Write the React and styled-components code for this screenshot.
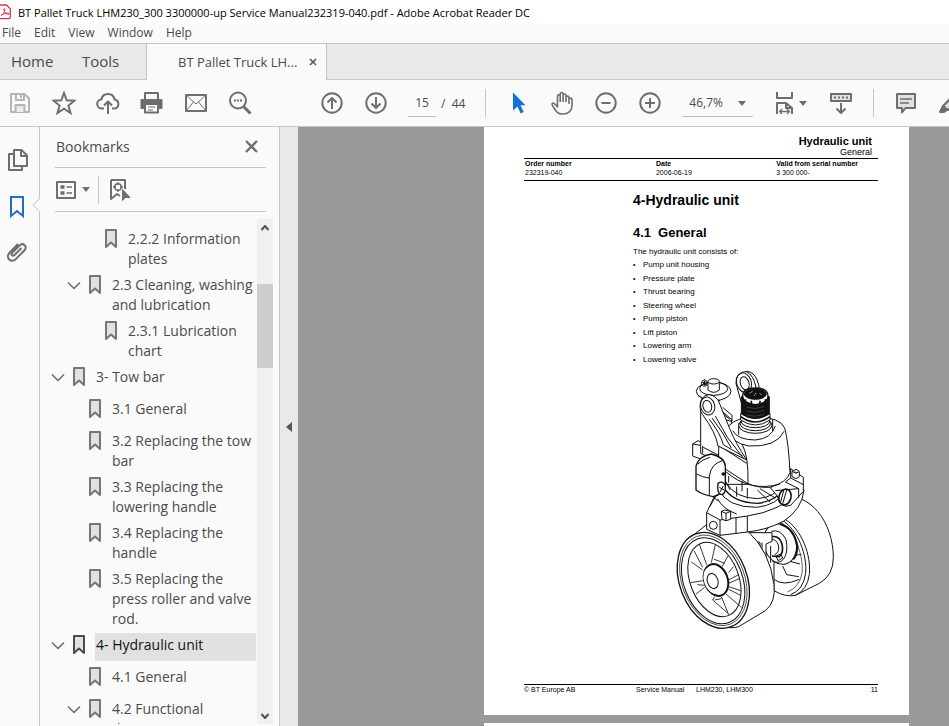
import { useState } from "react";
import styled, { createGlobalStyle } from "styled-components";

const GREY = "#6e6e6e";

const BOOKMARKS = [
  { text: "2.2.2 Information plates", level: 2 },
  { text: "2.3 Cleaning, washing and lubrication", level: 1, open: true },
  { text: "2.3.1 Lubrication chart", level: 2 },
  { text: "3- Tow bar", level: 0, open: true },
  { text: "3.1 General", level: 1 },
  { text: "3.2 Replacing the tow bar", level: 1 },
  { text: "3.3 Replacing the lowering handle", level: 1 },
  { text: "3.4 Replacing the handle", level: 1 },
  { text: "3.5 Replacing the press roller and valve rod.", level: 1 },
  { text: "4- Hydraulic unit", level: 0, open: true },
  { text: "4.1 General", level: 1 },
  { text: "4.2 Functional description", level: 1, open: true },
];

const PARTS = [
  "Pump unit housing",
  "Pressure plate",
  "Thrust bearing",
  "Steering wheel",
  "Pump piston",
  "Lift piston",
  "Lowering arm",
  "Lowering valve",
];

const GlobalStyle = createGlobalStyle`
  * {
    box-sizing: border-box;
  }

  body {
    margin: 0;
    overflow: hidden;
    font-family: "Open Sans", "Noto Sans", sans-serif;
    color: #4b4b4b;
  }

  button, input, select {
    font: inherit;
    color: inherit;
    background: none;
    border: 0;
    padding: 0;
    margin: 0;
  }

  svg {
    display: block;
    flex: none;
  }
`;

const Window = styled.div`
  display: flex;
  flex-direction: column;
  height: 100vh;
  background: #fafafa;
`;

const TitleBar = styled.header`
  display: flex;
  align-items: center;
  gap: 7px;
  height: 24px;
  flex: none;
  background: #fff;
  color: #000;
  font-size: 11px;
  white-space: nowrap;
`;

const MenuBar = styled.nav`
  display: flex;
  align-items: center;
  gap: 13px;
  height: 20px;
  flex: none;
  padding: 0 2px 2px;
  border-bottom: 1px solid #c6c6c6;
  font-size: 12px;
`;

const TabRow = styled.div`
  display: flex;
  height: 36px;
  flex: none;
  background: #e9e9e9;
`;

const Tab = styled.button`
  width: ${(p) => p.$width}px;
  padding: 0 0 2px ${(p) => p.$pad}px;
  border-bottom: 1px solid #c6c6c6;
  font-size: 15px;
  text-align: left;
`;

const FileTab = styled.div`
  display: flex;
  align-items: center;
  justify-content: space-between;
  width: 181px;
  padding: 0 9px 0 31px;
  border: 1px solid #c6c6c6;
  border-width: 0 1px;
  background: #fafafa;
  font-size: 13px;
  white-space: nowrap;
`;

const TabFill = styled.div`
  flex: 1;
  border-bottom: 1px solid #c6c6c6;
`;

const Toolbar = styled.div`
  display: flex;
  align-items: center;
  gap: 20px;
  height: 47px;
  flex: none;
  padding-left: 8px;
  border-bottom: 1px solid #c6c6c6;
  overflow: hidden;
  font-size: 12px;
`;

const Group = styled.div`
  display: flex;
  align-items: center;
  gap: ${(p) => p.$gap ?? 20}px;
  margin-right: ${(p) => p.$after ?? 0}px;
  white-space: nowrap;
`;

const IconButton = styled.button`
  display: flex;
  align-items: center;
  justify-content: center;
  flex: none;
  min-width: ${(p) => p.$size ?? 24}px;
  height: 24px;
`;

const PageInput = styled.input`
  width: 28px;
  height: 27px;
  border-bottom: 1px solid #c0c0c0;
  text-align: center;
`;

const ZoomBox = styled.div`
  position: relative;
  width: 71px;
  flex: none;

  select {
    appearance: none;
    width: 100%;
    height: 27px;
    padding-left: 7px;
    border-bottom: 1px solid #c0c0c0;
  }

  svg {
    position: absolute;
    right: 7px;
    top: 11px;
    pointer-events: none;
  }
`;

const Divider = styled.span`
  width: 1px;
  height: 28px;
  flex: none;
  background: #c6c6c6;
`;

const Main = styled.main`
  display: flex;
  flex: 1;
  min-height: 0;
`;

const Rail = styled.aside`
  position: relative;
  display: flex;
  flex-direction: column;
  align-items: center;
  gap: 22px;
  width: 40px;
  flex: none;
  padding: 21px 3px 0 0;
  border-right: 1px solid #c6c6c6;
`;

const Notch = styled.svg`
  position: absolute;
  right: -1px;
  top: 71px;
`;

const Panel = styled.section`
  display: flex;
  flex-direction: column;
  width: 240px;
  flex: none;
  border-right: 1px solid #c6c6c6;
`;

const PanelHead = styled.div`
  display: flex;
  align-items: center;
  justify-content: space-between;
  height: 41px;
  flex: none;
  margin: 0 13px 0 15px;
  padding: 0 6px 2px 1px;
  border-bottom: 1px solid #c6c6c6;

  h2 {
    margin: 0;
    font-size: 14px;
    font-weight: 400;
  }
`;

const PanelTools = styled.div`
  display: flex;
  align-items: center;
  gap: 8px;
  height: 44px;
  flex: none;
  margin: 0 13px 0 15px;
  border-bottom: 1px solid #c6c6c6;
`;

const PanelBody = styled.div`
  display: flex;
  flex: 1;
  min-height: 0;
  padding: 7px 6px 2px 0;
`;

const Tree = styled.ul`
  flex: 1;
  min-width: 0;
  margin: 0;
  padding: 8px 1px 0 11px;
  overflow: hidden;
  list-style: none;
`;

const TreeItem = styled.li`
  display: flex;
  align-items: flex-start;
  gap: 8px;
  margin-bottom: 4px;
  padding-left: ${(p) => p.$level * 16}px;
`;

const Toggle = styled.button`
  width: 14px;
  height: 24px;
  flex: none;
`;

const Label = styled.button`
  flex: 1;
  min-height: 28px;
  margin-left: 2px;
  padding: 2px 0 0 1px;
  display: flex;
  background: ${(p) => (p.$active ? "#e1e1e1" : "none")};
  color: ${(p) => (p.$active ? "#111" : "inherit")};
  font-size: 14px;
  line-height: 20px;
  text-align: left;
`;

const ScrollTrack = styled.div`
  display: flex;
  flex-direction: column;
  align-items: center;
  justify-content: space-between;
  width: 16px;
  flex: none;
  background: #f0f0f0;
`;

const ScrollThumb = styled.div`
  width: 16px;
  height: 84px;
  margin: 48px 0 auto;
  background: #cdcdcd;
`;

const Collapse = styled.button`
  display: flex;
  align-items: center;
  justify-content: center;
  width: 18px;
  flex: none;
  background: #e9e9e9;
`;

const Canvas = styled.div`
  flex: 1;
  min-width: 0;
  padding: 0 40px 0 186px;
  background: #999;
  overflow: hidden;
`;

const Sheet = styled.article`
  height: 588px;
  display: flex;
  flex-direction: column;
  margin-bottom: 8px;
  padding: 8px 31px 20px 40px;
  background: #fff;
  color: #000;
  font-family: "Liberation Sans", Arial, sans-serif;
  font-size: 7px;
`;

const RunningHead = styled.div`
  padding: 0 6px 1px 0;
  border-bottom: 1px solid #000;
  text-align: right;
  font-size: 9px;
  line-height: 10px;

  strong {
    display: block;
    font-size: 11px;
    line-height: 12px;
  }
`;

const OrderTable = styled.table`
  width: 100%;
  table-layout: fixed;
  border-collapse: collapse;
  border-bottom: 1px solid #000;
  text-align: left;
  line-height: 9px;
  white-space: nowrap;

  th, td {
    padding: 0 0 0 1px;
  }

  td {
    padding-bottom: 3px;
  }

  th:nth-child(1) {
    width: 37%;
  }

  th:nth-child(2) {
    width: 34%;
  }
`;

const Chapter = styled.div`
  padding: 10px 0 0 109px;
  font-size: 8px;
  line-height: 12px;

  h1, h2 {
    margin: 0;
    font-size: 14px;
    line-height: 18px;
  }

  h2 {
    margin: 15px 0 4px;
    font-size: 13px;
  }

  h2 span {
    margin-right: 7px;
  }

  p {
    margin: 0;
  }

  ul {
    display: flex;
    flex-direction: column;
    justify-content: space-between;
    height: 107px;
    margin: 1px 0 0;
    padding: 0;
    list-style: none;
  }

  li::before {
    content: "•";
    display: inline-block;
    width: 10px;
    font-size: 7px;
  }
`;

const Figure = styled.svg`
  width: 170px;
  height: 270px;
  margin-left: 146px;
`;

const SheetFoot = styled.footer`
  display: flex;
  margin-top: auto;
  border-top: 1px solid #000;
  padding-bottom: 1px;
  line-height: 9px;

  span:nth-child(1) {
    width: 112px;
  }

  span:nth-child(2) {
    width: 60px;
  }

  span:nth-child(3) {
    flex: 1;
  }
`;

const Icon = ({ w = 24, h = 24, sw = 2, color = GREY, children }) => (
  <svg
    width={w}
    height={h}
    viewBox={`0 0 ${w} ${h}`}
    fill="none"
    stroke={color}
    strokeWidth={sw}
    strokeLinejoin="round"
  >
    {children}
  </svg>
);

const Caret = () => (
  <svg width="8" height="5" viewBox="0 0 8 5" fill={GREY}>
    <path d="M0 0h8L4 5z" />
  </svg>
);

const BookmarkIcon = ({ active }) => (
  <Icon w={12} h={24} color={active ? "#4b4b4b" : "#767676"}>
    <path d="M1 3h10v17l-5-4.500-5 4.500z" fill="#e1e1e1" />
  </Icon>
);

const FileIcon = () => (
  <svg width="11" height="16" viewBox="0 0 11 16" fill="none" stroke="#d6364f">
    <path d="M-3 1h9.500l3.800 3.800V13q0 1.600-1.600 1.600H-3" strokeWidth="1.300" />
    <path d="M1 11.500C3 10.500 5 8 4.800 5.300c-.1-1.100-1.200-.9-1 .3C4.200 8 6 10 8.500 10.300c1 0 .8-1.200-.4-1.200-2.400 0-5 .8-7.100 2.400z" />
  </svg>
);

const DiscIcon = ({ children }) => (
  <Icon>
    <circle cx="12" cy="12" r="9.700" />
    {children}
  </Icon>
);

const PumpDrawing = () => (
  <Figure
    viewBox="0 0 510 810"
    fill="none"
    stroke="#111"
    strokeWidth="3"
    strokeLinejoin="round"
    role="img"
    aria-label="Hydraulic unit"
  >
    {/* rear wheel */}
    <path
      d="M330 396C420 372 490 470 490 575Q490 628 448 652L376 688Q345 694 312 674V480z"
      fill="#fff"
    />
    <path d="M342 458C396 488 424 570 418 625Q412 672 376 688" />
    <path d="M332 460C386 490 412 570 407 622Q400 672 362 686" />
    <path d="M324 462C376 494 402 572 396 622Q388 664 352 678" strokeWidth="2" />
    <path d="M312 640Q340 662 388 640M338 594L360 580Q376 564 394 566M352 584L390 594M338 600L350 626 386 632" />
    <ellipse cx="330" cy="534" rx="48" ry="62" transform="rotate(-18 330 534)" fill="#fff" />
    <path d="M330 474Q372 486 382 540Q382 566 370 580" strokeWidth="6" />
    <path d="M304 496Q330 488 348 520Q356 560 340 580Q326 596 306 584" />
    <path d="M306 512Q328 508 336 534Q342 560 328 572L306 570" strokeWidth="5" />
    <path d="M302 520Q320 518 326 540Q328 560 314 566M318 570l14-6 6 12-14 8z" />
    <path d="M236 500H306V526L288 534V584L270 560V530L246 520z" fill="#fff" />
    <path d="M276 530V570M302 540V590" />

    {/* front wheel */}
    <path
      d="M62 514L112 474 232 494Q300 556 312 656Q318 708 286 734L206 782Q180 790 150 778z"
      fill="#fff"
    />
    <g transform="rotate(-21 130 643)">
      <ellipse cx="130" cy="643" rx="101" ry="149" fill="#fff" strokeWidth="4" />
      <ellipse cx="130" cy="643" rx="94" ry="141" strokeWidth="2" />
      <ellipse cx="129" cy="644" rx="88" ry="134" />
      <ellipse cx="134" cy="642" rx="73" ry="116" />
    </g>
    {/* spokes */}
    <g strokeWidth="2.500">
      <path d="M88 534L110 596M72 554L98 604M64 588L98 612" />
      <path d="M136 536L124 590M132 580L144 584 164 592M174 570L156 602" />
      <path d="M206 626L172 644M208 638L176 652M176 620L190 602" />
      <path d="M212 674L176 662M214 724L168 684M176 670L212 688" />
      <path d="M176 746L154 692M134 692L128 702 174 742M134 702L154 698" />
      <path d="M62 650L98 644M78 684L104 664M82 656L104 658" />
    </g>
    <ellipse cx="138" cy="642" rx="35" ry="49" transform="rotate(-20 138 642)" fill="#fff" strokeWidth="6" />
    <ellipse cx="130" cy="643" rx="28" ry="42" transform="rotate(-20 130 643)" fill="#fff" stroke="none" />
    <ellipse cx="128" cy="645" rx="16" ry="23" transform="rotate(-18 128 645)" />

    {/* steering plate and fork */}
    <path
      d="M110 440L150 355H390L402 372Q396 430 340 466Q290 492 232 498L150 508 110 490z"
      fill="#fff"
    />
    <path d="M110 440L150 462V508M150 462L232 450Q330 436 392 374M198 456V502M232 450V498M118 424L146 376M142 398Q160 430 200 444" />
    <circle cx="130" cy="478" r="12" />
    <path d="M154 436l10-4 18 4v24l-14 4-12-4zM154 436l14 6 14-6M168 442v22" fill="#fff" />
    <path d="M146 370Q170 424 260 424Q322 418 350 370" fill="#fff" />
    <path d="M160 362Q186 410 262 412Q320 406 340 366" strokeWidth="4" />
    <path d="M170 352Q196 396 262 398Q316 394 336 356M200 362V392M232 366V398M262 372L300 408M270 368L316 396" />

    {/* right bracket */}
    <path d="M302 366L362 308 400 334V376L362 418Q330 430 322 390z" fill="#fff" />
    <path d="M362 308V336L400 356M362 336L346 348 386 368V396M316 374L386 368" />
    <path d="M366 316v16l12 6 10-6v-14M366 316l12-6 10 6-10 6z" fill="#fff" />
    <ellipse cx="345" cy="393" rx="18" ry="24" transform="rotate(15 345 393)" strokeWidth="5" fill="#fff" />
    <path d="M350 372L338 414M342 370L332 408" />

    {/* back plate */}
    <path d="M92 130V238L68 234V270L146 300V260L184 246V160L150 130z" fill="#fff" />
    <path d="M92 238V262M68 234L84 224 92 228M92 262L146 288M100 244L146 268M98 262V240M158 124L186 148V166L168 162M152 138L180 160" />

    {/* oil filler disc */}
    <ellipse cx="131" cy="76" rx="52" ry="28" fill="#fff" />
    <ellipse cx="131" cy="68" rx="42" ry="20" />
    <path d="M84 88Q106 108 150 104" />
    <path d="M114 46V72Q131 86 148 72V46" fill="#fff" />
    <ellipse cx="131" cy="46" rx="17" ry="8" fill="#fff" />
    <path d="M96 46l8-5 8 6-2 12-10 2-6-8z" />
    <path d="M98 48l10 8M104 44v14" strokeWidth="4" />

    {/* lifting eye */}
    <path d="M198 52Q196 18 232 16Q256 18 266 56L270 92 214 110z" fill="#fff" />
    <ellipse cx="222" cy="50" rx="22" ry="30" transform="rotate(-18 222 50)" />
    <ellipse cx="224" cy="52" rx="13" ry="20" transform="rotate(-18 224 52)" />
    <path d="M230 18Q250 26 258 64" />

    {/* pump body */}
    <path
      d="M178 178Q200 154 258 152Q330 154 344 186Q356 230 360 320Q350 350 300 364Q260 366 232 352L146 296V238z"
      fill="#fff"
    />
    <path d="M180 196Q182 230 236 240Q320 244 342 196" />
    <path d="M188 194Q204 222 256 222Q304 218 316 180" />
    <path d="M206 172V206M308 160V196M216 234Q236 270 234 352M146 238L230 292M166 316Q240 380 330 354M176 330V350M216 346V376" />
    <ellipse cx="256" cy="178" rx="50" ry="24" fill="#fff" />
    <ellipse cx="256" cy="172" rx="46" ry="22" />
    <ellipse cx="256" cy="166" rx="43" ry="19" />
    <path d="M212 142V162Q256 192 300 162V142" fill="#fff" />
    <path d="M212 152Q256 184 300 152" strokeWidth="5" />

    {/* piston and spring */}
    <path d="M214 92V144Q256 172 298 144V92z" fill="#111" />
    <path d="M218 90Q218 66 256 66Q294 66 294 90Q294 112 256 116Q218 112 218 90z" fill="#fff" strokeWidth="4" />
    <ellipse cx="256" cy="84" rx="33" ry="16" fill="#111" />
    <path d="M238 82l10-6M252 90l6-10M268 82l8 4" stroke="#fff" strokeWidth="1.500" />
    <path d="M226 100V110M244 104V116M270 104V116M286 100V108" strokeWidth="5" />
    <path
      d="M230 134Q256 144 282 132M230 146Q256 156 282 144M230 124Q256 132 282 122"
      stroke="#999"
      strokeWidth="1"
    />

    {/* lowering arm */}
    <path
      d="M90 122Q90 90 116 86Q142 88 150 116L180 190Q196 230 230 282L144 240Q138 200 98 146Q90 138 90 122z"
      fill="#fff"
    />
    <ellipse cx="113" cy="120" rx="21" ry="27" transform="rotate(-15 113 120)" />
    <ellipse cx="112" cy="121" rx="13" ry="18" transform="rotate(-15 112 121)" />
    <path d="M118 160Q150 200 160 236L218 270M126 156Q160 200 184 246M136 150L172 214 220 276" />

    {/* pump cap */}
    <path
      d="M78 372V300Q86 270 124 264Q164 274 166 300V360Q160 384 130 392Q96 386 78 372z"
      fill="#fff"
      strokeWidth="4"
    />
    <path d="M118 388V330Q124 292 158 284M80 324Q96 334 118 336M84 294Q96 280 120 274" />
    <circle cx="160" cy="324" r="4" fill="#111" />
    <path d="M144 352Q160 342 166 360Q168 384 154 386Q140 382 144 352z" fill="#fff" strokeWidth="4" />
    <path d="M148 364L162 372M150 378L160 360M130 392L144 406M166 344L180 372" />
  </Figure>
);

export default function App() {
  const [current, setCurrent] = useState("4- Hydraulic unit");
  const [page, setPage] = useState("15");

  return (
    <Window>
      <GlobalStyle />
      <TitleBar>
        <FileIcon />
        BT Pallet Truck LHM230_300 3300000-up Service Manual232319-040.pdf - Adobe Acrobat Reader DC
      </TitleBar>
      <MenuBar>
        {["File", "Edit", "View", "Window", "Help"].map((m) => (
          <button key={m}>{m}</button>
        ))}
      </MenuBar>
      <TabRow>
        <Tab $width={71} $pad={11}>Home</Tab>
        <Tab $width={75} $pad={11}>Tools</Tab>
        <FileTab>
          BT Pallet Truck LH...
          <button aria-label="Close tab">
            <Icon w={8} h={8} sw={1.6} color="#555">
              <path d="M1 1l6 6M7 1L1 7" />
            </Icon>
          </button>
        </FileTab>
        <TabFill />
      </TabRow>

      <Toolbar>
        <Group $after={48}>
          <IconButton aria-label="Save">
            <Icon color="#b4b4b4">
              <path d="M3 3h13.500L21 7.500V21H3z" />
              <path d="M8 3v6h8V3M13 4v3" />
              <path d="M7.500 21v-7h9v7" fill="#e9e9e9" />
            </Icon>
          </IconButton>
          <IconButton aria-label="Star">
            <Icon>
              <path
                d="M12 2l2.700 7.300 7.800.4-6.100 4.800 2.100 7.500-6.500-4.300L5.500 22l2.100-7.500L1.500 9.700l7.800-.4z"
                strokeLinejoin="miter"
              />
            </Icon>
          </IconButton>
          <IconButton aria-label="Upload">
            <Icon>
              <path d="M8 17.500H6a4.500 4.500 0 01-.6-9C6 5 8.700 3 12 3c3.500 0 6 2.300 6.500 5.600 5.500.9 5 8.900-.5 8.900h-2" />
              <path d="M12 23V11M8 14.500l4-4 4 4" />
            </Icon>
          </IconButton>
          <IconButton aria-label="Print">
            <Icon>
              <path d="M5 8V2h13v6" />
              <path d="M1.500 9h20v8h-20z" fill={GREY} />
              <path d="M5 13h13v8.500H5z" fill="#fafafa" />
              <path d="M8 16h7M8 19h5" strokeWidth="1" />
            </Icon>
          </IconButton>
          <IconButton aria-label="Mail">
            <Icon>
              <path d="M2 4h20v16H2z" />
              <path d="M2 4l10 9L22 4M2 20l7.500-9M22 20l-7.500-9" strokeWidth="1" />
            </Icon>
          </IconButton>
          <IconButton aria-label="Find">
            <Icon>
              <circle cx="10" cy="9.500" r="8" />
              <path d="M15.500 15.500l7 7" strokeWidth="3" />
              <path d="M6 9.500h2M9 9.500h2M12 9.500h2" />
            </Icon>
          </IconButton>
        </Group>

        <Group>
          <IconButton aria-label="Previous page">
            <DiscIcon>
              <path d="M12 18V7M7.500 11.500L12 7l4.500 4.500" />
            </DiscIcon>
          </IconButton>
          <IconButton aria-label="Next page">
            <DiscIcon>
              <path d="M12 6v11M7.500 12.500L12 17l4.500-4.500" />
            </DiscIcon>
          </IconButton>
          <Group $gap={5}>
            <PageInput
              aria-label="Page"
              value={page}
              onChange={(e) => setPage(e.target.value)}
            />
            <span>/&nbsp; 44</span>
          </Group>
        </Group>

        <Divider />

        <Group>
          <IconButton aria-label="Select">
            <svg width="24" height="24" viewBox="0 0 24 24" fill="#1473d0">
              <path d="M7 1.500v18l4.500-4 3.200 7 3-1.400-3.200-6.800h5z" />
            </svg>
          </IconButton>
          <IconButton aria-label="Pan">
            <Icon sw={1.6}>
              <path d="M7.500 13V5.300c0-2 2.700-2 2.700 0V11M10.200 5V3c0-2 2.900-2 2.900 0v8M13.100 4.500c0-2 2.900-2 2.900 0V11M16 6.500c0-1.900 2.900-1.900 2.900 0L19 13M7.500 13v3c-1.500-1.800-3-4.500-4.700-4-1.600.6-.5 2.300 1.200 5 2 3.300 3.500 6 8.500 6 6.500 0 9.500-3.500 9.500-9V8.500c0-1.800-2.800-1.800-2.900 0" />
            </Icon>
          </IconButton>
          <IconButton aria-label="Zoom out">
            <DiscIcon>
              <path d="M7.500 12h9" />
            </DiscIcon>
          </IconButton>
          <IconButton aria-label="Zoom in">
            <DiscIcon>
              <path d="M7 12h10M12 7v10" />
            </DiscIcon>
          </IconButton>
          <ZoomBox>
            <select aria-label="Zoom level" defaultValue="46,7%">
              <option>46,7%</option>
              <option>100%</option>
            </select>
            <Caret />
          </ZoomBox>
          <Group $gap={2} $after={2}>
            <IconButton aria-label="Fit width">
              <Icon>
                <path d="M4 1v6h15V1M4 23V12h9l6 5v6M13 12v5h6" />
                <path d="M7 20.500h9M9 18l-2.500 2.500L9 23M14 18l2.500 2.500L14 23" strokeWidth="1.300" />
              </Icon>
            </IconButton>
            <Caret />
          </Group>
          <IconButton aria-label="Scroll mode">
            <Icon>
              <path d="M2 3h20v7H2z" fill="#e1e1e1" />
              <path d="M5 6.500h2M9 6.500h2M13 6.500h2M17 6.500h2" />
              <path d="M12 12v10M7.500 17.500L12 22l4.500-4.500" />
            </Icon>
          </IconButton>
        </Group>

        <Divider />

        <Group>
          <IconButton aria-label="Comment">
            <Icon>
              <path d="M3 3h18v14h-9.500L8 21.500V17H3z" fill="#e1e1e1" />
              <path d="M6 8h12M6 12h9" strokeWidth="1.300" />
            </Icon>
          </IconButton>
          <IconButton aria-label="Highlight">
            <Icon>
              <path d="M5 15L17 3l5 5-12 11z" fill="#e1e1e1" />
              <path d="M2 21l3-6 4 4-3 2z" fill={GREY} />
            </Icon>
          </IconButton>
        </Group>
      </Toolbar>

      <Main>
        <Rail>
          <IconButton aria-label="Page thumbnails">
            <Icon>
              <path d="M8 2h7.500L21 7.500V18H8zM15 2v6h6M8 6H3v16h13v-4" />
            </Icon>
          </IconButton>
          <IconButton aria-label="Bookmarks">
            <Icon color="#1f6fc0">
              <path d="M5 3h12v19l-6-5-6 5z" strokeLinejoin="miter" />
            </Icon>
          </IconButton>
          <IconButton aria-label="Attachments">
            <Icon>
              <path d="M15.500 8l-7 7c-1.800 1.800-4-.3-2.300-2.200l7.300-7.300c3.500-3.500 8.500 1 5 4.700l-8.700 8.900c-4.500 4.500-10.800-1.400-6.300-6.300L12 4" />
            </Icon>
          </IconButton>
          <Notch width="8" height="14" viewBox="0 0 8 14">
            <path d="M8 0L1 7l7 7" fill="#fafafa" stroke="#c6c6c6" />
          </Notch>
        </Rail>

        <Panel>
          <PanelHead>
            <h2>Bookmarks</h2>
            <IconButton aria-label="Close panel" $size={12}>
              <Icon w={18} h={18} sw={2.3}>
                <path d="M4 4l11 11M15 4L4 15" />
              </Icon>
            </IconButton>
          </PanelHead>
          <PanelTools>
            <Group as="button" $gap={3} aria-label="Options">
              <Icon>
                <path d="M2 4h18v16H2z" />
                <path d="M5.500 9h4M5.500 15h4" strokeWidth="3.500" />
                <path d="M11.500 9H17M11.500 15H17" strokeWidth="1.500" />
              </Icon>
              <Caret />
            </Group>
            <Divider />
            <IconButton aria-label="Find current bookmark">
              <Icon>
                <path d="M4 2h14v9M4 2v19l6-5 3 2" />
                <circle cx="11" cy="9" r="3.300" strokeWidth="1.500" />
                <path d="M11 4v3M11 11v3M6 9h3M13 9h3" strokeWidth="1.300" />
                <path d="M15.500 11.500v11l3-3H23z" fill={GREY} strokeWidth="1" />
              </Icon>
            </IconButton>
          </PanelTools>
          <PanelBody>
            <Tree>
              {BOOKMARKS.map((b) => (
                <TreeItem key={b.text} $level={b.level}>
                  <Toggle aria-label={b.open ? "Collapse" : undefined} disabled={!b.open}>
                    {b.open && (
                      <Icon w={14} h={24} sw={1.6}>
                        <path d="M1 9.500l6 6 6-6" />
                      </Icon>
                    )}
                  </Toggle>
                  <BookmarkIcon active={current === b.text} />
                  <Label
                    $active={current === b.text}
                    onClick={() => setCurrent(b.text)}
                  >
                    {b.text}
                  </Label>
                </TreeItem>
              ))}
            </Tree>
            <ScrollTrack>
              <Icon w={16} h={17} color="#505050">
                <path d="M4.500 11L8 7l3.500 4" />
              </Icon>
              <ScrollThumb />
              <Icon w={16} h={17} color="#505050">
                <path d="M4.500 7L8 11l3.500-4" />
              </Icon>
            </ScrollTrack>
          </PanelBody>
        </Panel>

        <Collapse aria-label="Hide navigation pane">
          <svg width="6" height="10" viewBox="0 0 6 10" fill="#555">
            <path d="M6 0v10L0 5z" />
          </svg>
        </Collapse>

        <Canvas>
          <Sheet>
            <RunningHead>
              <strong>Hydraulic unit</strong>
              General
            </RunningHead>
            <OrderTable>
              <thead>
                <tr>
                  <th>Order number</th>
                  <th>Date</th>
                  <th>Valid from serial number</th>
                </tr>
              </thead>
              <tbody>
                <tr>
                  <td>232319-040</td>
                  <td>2006-06-19</td>
                  <td>3 300 000-</td>
                </tr>
              </tbody>
            </OrderTable>
            <Chapter>
              <h1>4-Hydraulic unit</h1>
              <h2>
                <span>4.1</span>General
              </h2>
              <p>The hydraulic unit consists of:</p>
              <ul>
                {PARTS.map((p) => (
                  <li key={p}>{p}</li>
                ))}
              </ul>
            </Chapter>
            <PumpDrawing />
            <SheetFoot>
              <span>© BT Europe AB</span>
              <span>Service Manual</span>
              <span>LHM230, LHM300</span>
              <span>11</span>
            </SheetFoot>
          </Sheet>
          <Sheet />
        </Canvas>
      </Main>
    </Window>
  );
}
